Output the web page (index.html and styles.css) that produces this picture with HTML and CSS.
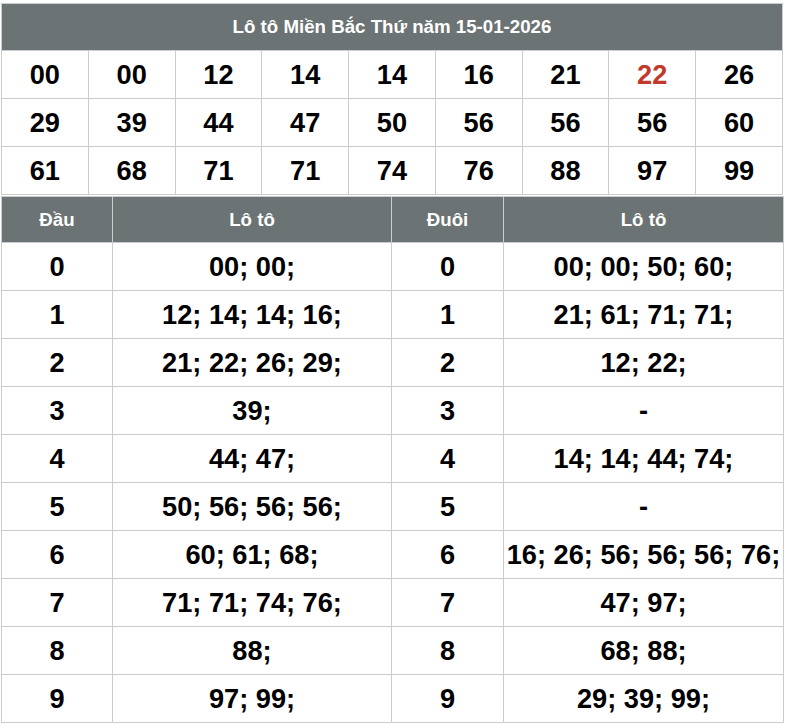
FILE: index.html
```html
<!DOCTYPE html>
<html lang="vi">
<head>
<meta charset="utf-8">
<link rel="stylesheet" href="styles.css">
</head>
<body>
<div class="wrap">
  <table class="grid">
    <thead>
      <tr><th colspan="9" class="title">Lô tô Miền Bắc Thứ năm 15-01-2026</th></tr>
    </thead>
    <tbody>
      <tr><td>00</td><td>00</td><td>12</td><td>14</td><td>14</td><td>16</td><td>21</td><td class="red">22</td><td>26</td></tr>
      <tr><td>29</td><td>39</td><td>44</td><td>47</td><td>50</td><td>56</td><td>56</td><td>56</td><td>60</td></tr>
      <tr><td>61</td><td>68</td><td>71</td><td>71</td><td>74</td><td>76</td><td>88</td><td>97</td><td>99</td></tr>
    </tbody>
  </table>
  <table class="dd">
    <colgroup><col class="c1"><col class="c2"><col class="c3"><col class="c4"></colgroup>
    <thead>
      <tr><th>Đầu</th><th>Lô tô</th><th>Đuôi</th><th>Lô tô</th></tr>
    </thead>
    <tbody>
      <tr><td>0</td><td>00; 00;</td><td>0</td><td>00; 00; 50; 60;</td></tr>
      <tr><td>1</td><td>12; 14; 14; 16;</td><td>1</td><td>21; 61; 71; 71;</td></tr>
      <tr><td>2</td><td>21; 22; 26; 29;</td><td>2</td><td>12; 22;</td></tr>
      <tr><td>3</td><td>39;</td><td>3</td><td>-</td></tr>
      <tr><td>4</td><td>44; 47;</td><td>4</td><td>14; 14; 44; 74;</td></tr>
      <tr><td>5</td><td>50; 56; 56; 56;</td><td>5</td><td>-</td></tr>
      <tr><td>6</td><td>60; 61; 68;</td><td>6</td><td>16; 26; 56; 56; 56; 76;</td></tr>
      <tr><td>7</td><td>71; 71; 74; 76;</td><td>7</td><td>47; 97;</td></tr>
      <tr><td>8</td><td>88;</td><td>8</td><td>68; 88;</td></tr>
      <tr><td>9</td><td>97; 99;</td><td>9</td><td>29; 39; 99;</td></tr>
    </tbody>
  </table>
</div>
</body>
</html>
```
FILE: styles.css
```css
html, body {
  margin: 0;
  padding: 0;
  background: #ffffff;
}
body {
  font-family: "Liberation Sans", Arial, sans-serif;
  color: #000;
}
.wrap {
  padding: 3px 0 0 1px;
  width: 782px;
}
table {
  width: 782px;
  border-collapse: collapse;
  table-layout: fixed;
}
th, td {
  border: 1px solid #cccccc;
  text-align: center;
  padding: 0;
  font-weight: bold;
}
.grid th.title {
  background: #6c7374;
  color: #fff;
  font-size: 18.7px;
  height: 46px;
  border-color: #cccccc;
}
.grid td {
  height: 47px;
  font-size: 27.2px;
}
.grid td.red {
  color: #c0392b;
}
.dd {
  margin-top: 1px;
}
.dd .c1 { width: 111px; }
.dd .c2 { width: 279px; }
.dd .c3 { width: 112px; }
.dd .c4 { width: 280px; }
.dd th {
  background: #6c7374;
  color: #fff;
  font-size: 18.7px;
  height: 45px;
}
.dd td {
  height: 47px;
  font-size: 27.2px;
  white-space: nowrap;
}
```
